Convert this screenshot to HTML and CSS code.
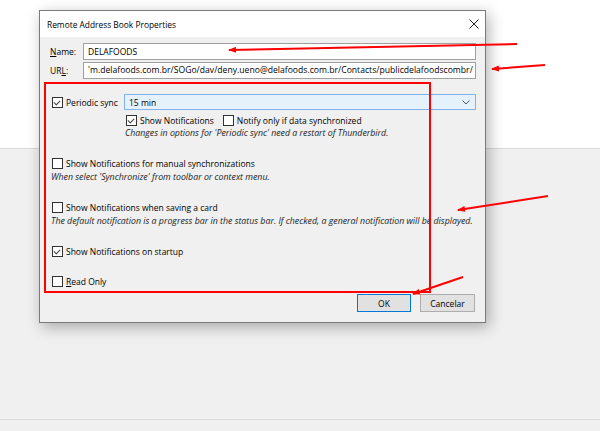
FILE: index.html
```html
<!DOCTYPE html>
<html lang="en">
<head>
  <meta charset="UTF-8">
  <title>Remote Address Book Properties</title>
  <link rel="stylesheet" href="styles.css">
</head>
<body>
  <div id="desktop">
    <div class="top-band"></div>
    <div class="mid-band"></div>
    <div class="low-band"></div>
  </div>

  <div id="dialog">
    <div class="title-bar">
      <span class="title">Remote Address Book Properties</span>
      <svg class="close" width="10" height="10" viewBox="0 0 10 10">
        <path d="M0.5 0.5 L9.5 9.5 M9.5 0.5 L0.5 9.5" stroke="#222" stroke-width="1" fill="none"/>
      </svg>
    </div>

    <div class="dialog-body">
      <div class="field-row">
        <label class="field-label"><u>N</u>ame:</label>
        <div class="text-box">DELAFOODS</div>
      </div>
      <div class="field-row url-row">
        <label class="field-label">UR<u>L</u>:</label>
        <div class="text-box url-box">'m.delafoods.com.br/SOGo/dav/deny.ueno@delafoods.com.br/Contacts/publicdelafoodscombr/</div>
      </div>

      <div class="check-row sync-row">
        <span class="box checked"></span>
        <span class="sync-label">Periodic sync</span>
        <div class="combo">
          <span>15 min</span>
          <svg width="8" height="5" viewBox="0 0 8 5">
            <path d="M0.5 0.5 L4 4 L7.5 0.5" stroke="#555" stroke-width="1" fill="none"/>
          </svg>
        </div>
      </div>
      <div class="check-row sub-row">
        <span class="box checked"></span>
        <span>Show Notifications</span>
        <span class="box second"></span>
        <span>Notify only if data synchronized</span>
      </div>
      <div class="note sub-note">Changes in options for 'Periodic sync' need a restart of Thunderbird.</div>

      <div class="check-row gap">
        <span class="box"></span>
        <span>Show Notifications for manual synchronizations</span>
      </div>
      <div class="note">When select 'Synchronize' from toolbar or context menu.</div>

      <div class="check-row gap">
        <span class="box"></span>
        <span>Show Notifications when saving a card</span>
      </div>
      <div class="note">The default notification is a progress bar in the status bar. If checked, a general notification will be displayed.</div>

      <div class="check-row gap">
        <span class="box checked"></span>
        <span>Show Notifications on startup</span>
      </div>
      <div class="check-row gap">
        <span class="box"></span>
        <span><u>R</u>ead Only</span>
      </div>

      <div class="buttons">
        <button class="default">OK</button>
        <button>Cancelar</button>
      </div>
    </div>
  </div>

  <!-- red annotations drawn on top of the screenshot -->
  <svg id="marks" width="600" height="431" viewBox="0 0 600 431">
    <defs>
      <marker id="head" markerWidth="8" markerHeight="6" refX="7" refY="3" orient="auto" markerUnits="userSpaceOnUse">
        <path d="M0 0 L8 3 L0 6 Z" fill="#f00"/>
      </marker>
    </defs>
    <rect x="45" y="83" width="385" height="209" fill="none" stroke="#f00" stroke-width="2"/>
    <line x1="517" y1="44" x2="229" y2="50" stroke="#f00" stroke-width="2" marker-end="url(#head)"/>
    <line x1="545" y1="65" x2="492" y2="69" stroke="#f00" stroke-width="2" marker-end="url(#head)"/>
    <line x1="548" y1="196" x2="458" y2="210" stroke="#f00" stroke-width="2" marker-end="url(#head)"/>
    <line x1="463" y1="277" x2="413" y2="294" stroke="#f00" stroke-width="2" marker-end="url(#head)"/>
  </svg>
</body>
</html>
```

FILE: styles.css
```css
body {
  margin: 0;
  width: 600px;
  height: 431px;
  overflow: hidden;
  background: #f0f0f0;
  font-family: "Open Sans", "Noto Sans", sans-serif;
  font-size: 8.5px;
  color: #000;
  position: relative;
}
.top-band {
  height: 148px;
  background: #fff;
  border-bottom: 1px solid #dadada;
}
.mid-band {
  height: 270px;
  background: #f0f0f0;
  border-bottom: 1px solid #dadada;
}
.low-band {
  height: 12px;
  background: #f0f0f0;
}
#dialog {
  position: absolute;
  left: 39px;
  top: 10px;
  width: 445px;
  height: 311px;
  border: 1px solid #7a7a7a;
  background: #f0f0f0;
  box-shadow: 3px 4px 14px rgba(0,0,0,0.3);
}
.title-bar {
  height: 26px;
  background: #fff;
  display: flex;
  align-items: center;
  justify-content: space-between;
  padding: 0 6px 0 7px;
}
.title {
  font-size: 8.4px;
}
.dialog-body {
  padding: 6px 9px 0 12px;
}
.field-row {
  display: flex;
  align-items: center;
  height: 17px;
}
.url-row {
  margin-top: 2px;
}
.field-label {
  width: 33px;
  margin-left: -2px;
}
.text-box {
  flex: 1;
  height: 15px;
  line-height: 15px;
  border: 1px solid #a0a0a0;
  background: #fff;
  padding-left: 4px;
  white-space: nowrap;
  overflow: hidden;
}
.url-box {
  font-size: 8.65px;
}
.check-row {
  display: flex;
  align-items: center;
  height: 14px;
  white-space: nowrap;
}
.box {
  width: 9px;
  height: 9px;
  border: 1px solid #333;
  background: #fff;
  margin-right: 3px;
  flex: none;
  position: relative;
}
.box.checked::after {
  content: "";
  position: absolute;
  left: 2px;
  top: 0;
  width: 5px;
  height: 3px;
  border-left: 1px solid #444;
  border-bottom: 1px solid #444;
  transform: translate(-1px, 2px) rotate(-45deg);
}
.box.second {
  margin-left: 9px;
}
.sync-row {
  height: 16px;
  margin-top: 15px;
}
.sync-label {
  width: 58px;
}
.combo {
  flex: 1;
  height: 14px;
  border: 1px solid #7eb4ea;
  background: #e5f1fb;
  display: flex;
  align-items: center;
  justify-content: space-between;
  padding: 0 5px 0 4px;
}
.sub-row {
  margin-top: 3px;
  margin-left: 74px;
}
.note {
  font-style: italic;
  font-size: 8.8px;
  height: 13px;
  line-height: 13px;
  margin-left: -1px;
  margin-top: 1px;
  color: #222;
  white-space: nowrap;
}
.sub-note {
  margin-left: 73px;
  margin-top: 0;
}
.gap {
  margin-top: 16px;
}
.buttons {
  display: flex;
  justify-content: flex-end;
  gap: 9px;
  margin-top: 6px;
  padding-right: 1px;
}
button {
  height: 18px;
  width: 55px;
  border: 1px solid #adadad;
  background: #e1e1e1;
  font-family: inherit;
  font-size: 8.5px;
  padding: 0;
}
button.default {
  width: 54px;
  border-color: #0078d7;
}
#marks {
  position: absolute;
  left: 0;
  top: 0;
  pointer-events: none;
}
```
